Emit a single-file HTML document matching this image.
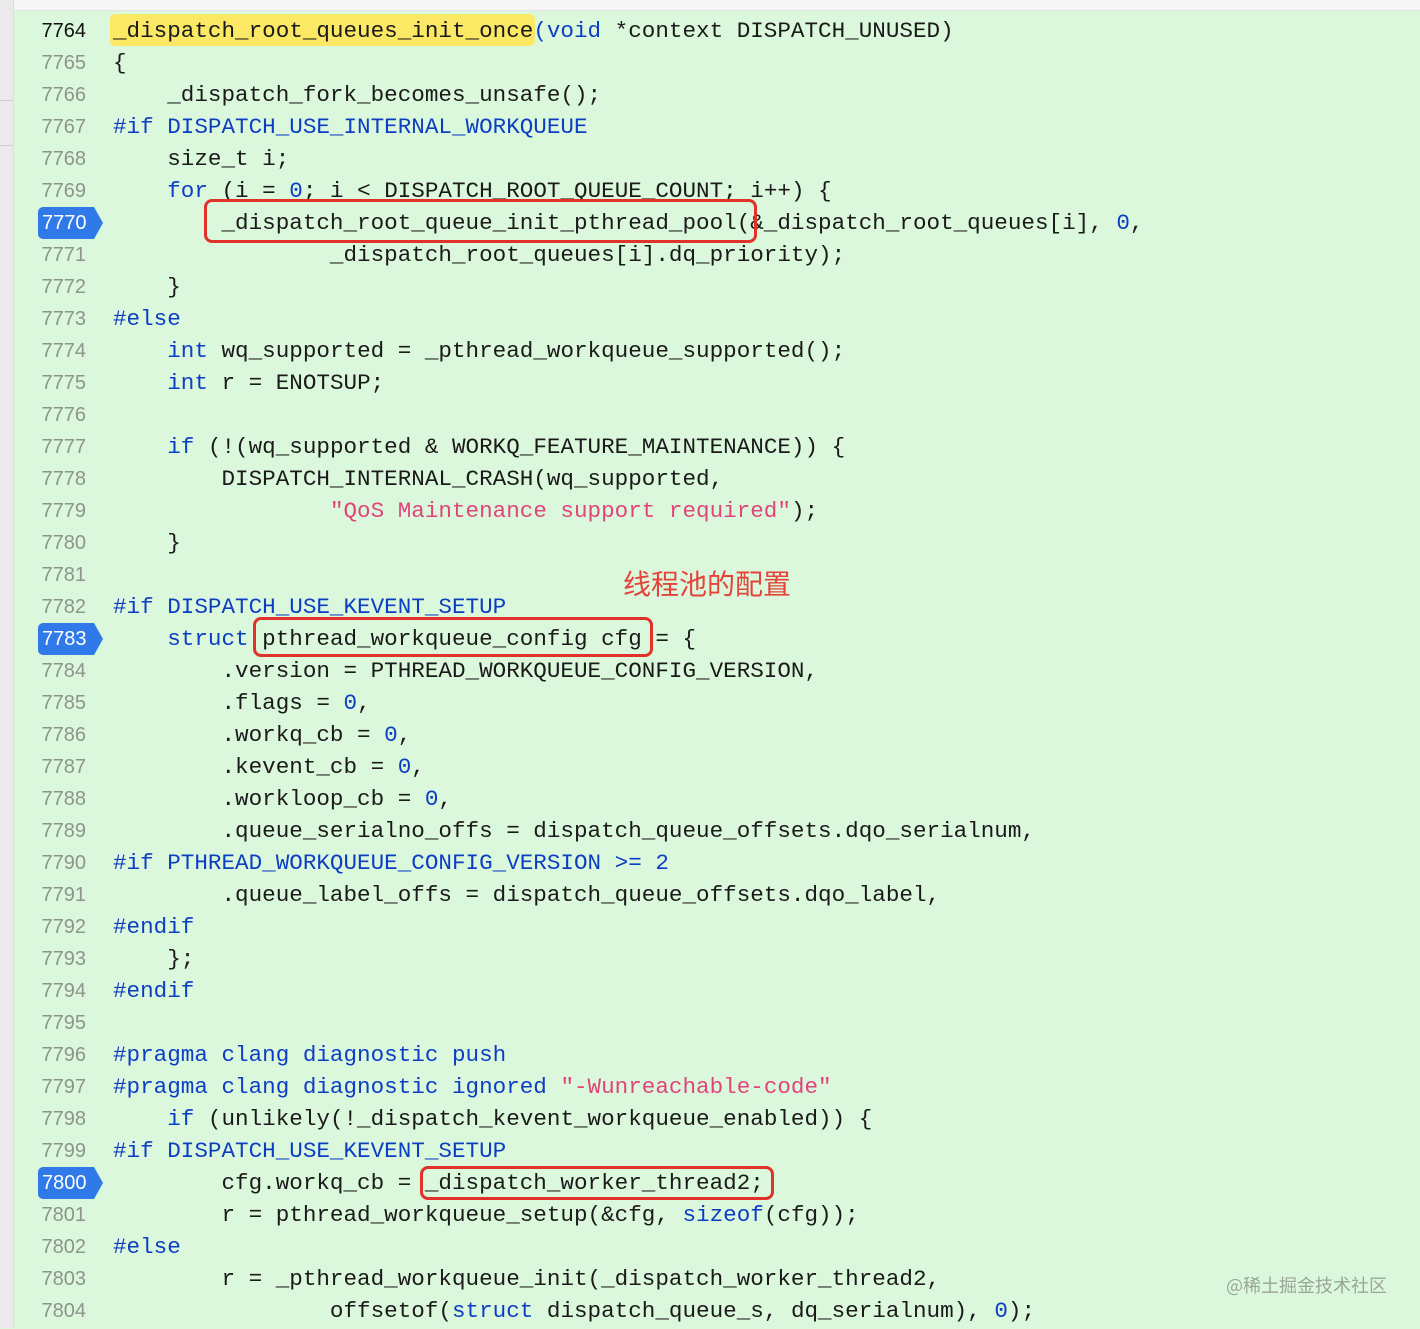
<!DOCTYPE html>
<html><head><meta charset="utf-8"><style>
html,body{margin:0;padding:0}
body{width:1420px;height:1328px;position:relative;overflow:hidden;background:#dcf8dc;font-family:"Liberation Mono",monospace}
.top{position:absolute;left:0;top:0;width:1420px;height:10px;background:#f6f6f6;border-bottom:1px solid #e2e2e2}
.side{position:absolute;left:0;top:0;width:13px;height:1328px;background:#ebe9eb;border-right:1px solid #dcdcdc}
.sep{position:absolute;left:0;width:13px;height:1px;background:#cfcfcf}
.wrap{position:absolute;left:0;top:1px;width:1420px;height:1328px}
.ln{position:absolute;left:20px;width:66px;text-align:right;font-family:"Liberation Sans",sans-serif;font-size:20px;color:#8d948d;line-height:32px;height:32px}
.ln.cur{color:#111}
.badge{position:absolute;left:38px;width:56px;height:32px;background:#2f7ae8;border-radius:5px 0 0 5px}
.badge:after{content:"";position:absolute;right:-9px;top:0;border-left:9px solid #2f7ae8;border-top:16px solid transparent;border-bottom:16px solid transparent}
.badge span{position:absolute;left:4px;top:0;line-height:32px;color:#fff;font-family:"Liberation Sans",sans-serif;font-size:20px;z-index:2}
.c{position:absolute;left:113px;font-size:22.6px;line-height:32px;height:32px;white-space:pre;color:#1a1a1a}
.k{color:#0c3ec4}
.s{color:#e0457a}
.hl{position:absolute;left:110px;top:14px;width:425px;height:32px;background:#fbe965;border-radius:5px}
.box{position:absolute;border:3.5px solid #e0322a;border-radius:8px;box-sizing:border-box}
.note{position:absolute;left:623px;top:563px;font-family:"Noto Sans CJK SC",sans-serif;font-size:28px;line-height:40px;color:#e5433a}
.wm{position:absolute;left:1226px;top:1272px;font-family:"Noto Sans CJK SC",sans-serif;font-size:18px;color:#9aa59a}
</style></head><body>
<div class="top"></div><div class="side"></div>
<div class="sep" style="top:100px"></div><div class="sep" style="top:145px"></div>
<div class="hl"></div>
<div class="wrap">
<div class="ln cur" style="top:14px">7764</div><div class="c" style="top:14px">_dispatch_root_queues_init_once<span class="k">(void</span> *context DISPATCH_UNUSED)</div>
<div class="ln" style="top:46px">7765</div><div class="c" style="top:46px">{</div>
<div class="ln" style="top:78px">7766</div><div class="c" style="top:78px">    _dispatch_fork_becomes_unsafe();</div>
<div class="ln" style="top:110px">7767</div><div class="c k" style="top:110px">#if DISPATCH_USE_INTERNAL_WORKQUEUE</div>
<div class="ln" style="top:142px">7768</div><div class="c" style="top:142px">    size_t i;</div>
<div class="ln" style="top:174px">7769</div><div class="c" style="top:174px">    <span class="k">for</span> (i = <span class="k">0</span>; i &lt; DISPATCH_ROOT_QUEUE_COUNT; i++) {</div>
<div class="badge" style="top:206px"><span>7770</span></div><div class="c" style="top:206px">        _dispatch_root_queue_init_pthread_pool(&amp;_dispatch_root_queues[i], <span class="k">0</span>,</div>
<div class="ln" style="top:238px">7771</div><div class="c" style="top:238px">                _dispatch_root_queues[i].dq_priority);</div>
<div class="ln" style="top:270px">7772</div><div class="c" style="top:270px">    }</div>
<div class="ln" style="top:302px">7773</div><div class="c k" style="top:302px">#else</div>
<div class="ln" style="top:334px">7774</div><div class="c" style="top:334px">    <span class="k">int</span> wq_supported = _pthread_workqueue_supported();</div>
<div class="ln" style="top:366px">7775</div><div class="c" style="top:366px">    <span class="k">int</span> r = ENOTSUP;</div>
<div class="ln" style="top:398px">7776</div>
<div class="ln" style="top:430px">7777</div><div class="c" style="top:430px">    <span class="k">if</span> (!(wq_supported &amp; WORKQ_FEATURE_MAINTENANCE)) {</div>
<div class="ln" style="top:462px">7778</div><div class="c" style="top:462px">        DISPATCH_INTERNAL_CRASH(wq_supported,</div>
<div class="ln" style="top:494px">7779</div><div class="c" style="top:494px">                <span class="s">"QoS Maintenance support required"</span>);</div>
<div class="ln" style="top:526px">7780</div><div class="c" style="top:526px">    }</div>
<div class="ln" style="top:558px">7781</div>
<div class="ln" style="top:590px">7782</div><div class="c k" style="top:590px">#if DISPATCH_USE_KEVENT_SETUP</div>
<div class="badge" style="top:622px"><span>7783</span></div><div class="c" style="top:622px">    <span class="k">struct</span> pthread_workqueue_config cfg = {</div>
<div class="ln" style="top:654px">7784</div><div class="c" style="top:654px">        .version = PTHREAD_WORKQUEUE_CONFIG_VERSION,</div>
<div class="ln" style="top:686px">7785</div><div class="c" style="top:686px">        .flags = <span class="k">0</span>,</div>
<div class="ln" style="top:718px">7786</div><div class="c" style="top:718px">        .workq_cb = <span class="k">0</span>,</div>
<div class="ln" style="top:750px">7787</div><div class="c" style="top:750px">        .kevent_cb = <span class="k">0</span>,</div>
<div class="ln" style="top:782px">7788</div><div class="c" style="top:782px">        .workloop_cb = <span class="k">0</span>,</div>
<div class="ln" style="top:814px">7789</div><div class="c" style="top:814px">        .queue_serialno_offs = dispatch_queue_offsets.dqo_serialnum,</div>
<div class="ln" style="top:846px">7790</div><div class="c k" style="top:846px">#if PTHREAD_WORKQUEUE_CONFIG_VERSION &gt;= 2</div>
<div class="ln" style="top:878px">7791</div><div class="c" style="top:878px">        .queue_label_offs = dispatch_queue_offsets.dqo_label,</div>
<div class="ln" style="top:910px">7792</div><div class="c k" style="top:910px">#endif</div>
<div class="ln" style="top:942px">7793</div><div class="c" style="top:942px">    };</div>
<div class="ln" style="top:974px">7794</div><div class="c k" style="top:974px">#endif</div>
<div class="ln" style="top:1006px">7795</div>
<div class="ln" style="top:1038px">7796</div><div class="c k" style="top:1038px">#pragma clang diagnostic push</div>
<div class="ln" style="top:1070px">7797</div><div class="c k" style="top:1070px">#pragma clang diagnostic ignored <span class="s">"-Wunreachable-code"</span></div>
<div class="ln" style="top:1102px">7798</div><div class="c" style="top:1102px">    <span class="k">if</span> (unlikely(!_dispatch_kevent_workqueue_enabled)) {</div>
<div class="ln" style="top:1134px">7799</div><div class="c k" style="top:1134px">#if DISPATCH_USE_KEVENT_SETUP</div>
<div class="badge" style="top:1166px"><span>7800</span></div><div class="c" style="top:1166px">        cfg.workq_cb = _dispatch_worker_thread2;</div>
<div class="ln" style="top:1198px">7801</div><div class="c" style="top:1198px">        r = pthread_workqueue_setup(&amp;cfg, <span class="k">sizeof</span>(cfg));</div>
<div class="ln" style="top:1230px">7802</div><div class="c k" style="top:1230px">#else</div>
<div class="ln" style="top:1262px">7803</div><div class="c" style="top:1262px">        r = _pthread_workqueue_init(_dispatch_worker_thread2,</div>
<div class="ln" style="top:1294px">7804</div><div class="c" style="top:1294px">                offsetof(<span class="k">struct</span> dispatch_queue_s, dq_serialnum), <span class="k">0</span>);</div>
</div>
<div class="box" style="left:204px;top:199px;width:553px;height:44px"></div>
<div class="box" style="left:253px;top:617px;width:400px;height:40px"></div>
<div class="box" style="left:420px;top:1166px;width:354px;height:34px"></div>
<div class="note">线程池的配置</div>
<div class="wm">@稀土掘金技术社区</div>
</body></html>
